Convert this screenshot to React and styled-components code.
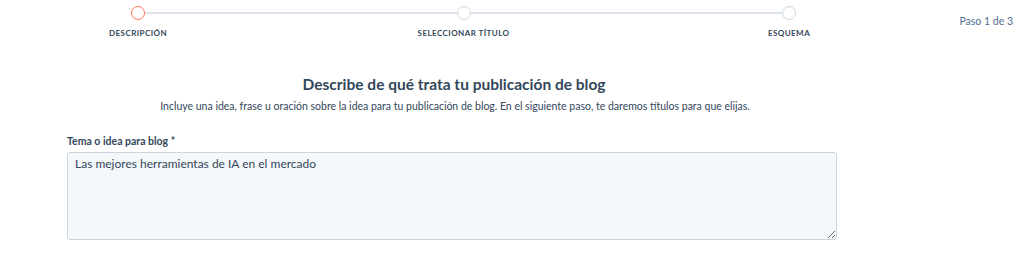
import React from "react";
import styled, { createGlobalStyle } from "styled-components";

const Global = createGlobalStyle`
  html, body { margin: 0; padding: 0; background: #ffffff; }
  body { font-family: "Lato", "Noto Sans", sans-serif; color: #33475b; }
  * { box-sizing: border-box; }
`;

const Page = styled.div`
  width: 1024px;
  height: 264px;
  overflow: hidden;
`;

const TopBar = styled.div`
  display: flex;
  align-items: flex-start;
  padding: 6px 11px 0 131px;
  height: 48px;
`;

const Stepper = styled.div`
  position: relative;
  display: flex;
  justify-content: space-between;
  width: 665px;
  &::before {
    content: "";
    position: absolute;
    left: 7px;
    right: 7px;
    top: 6px;
    height: 2px;
    background: #dfe3eb;
  }
`;

const Step = styled.div`
  position: relative;
  width: 14px;
  display: flex;
  flex-direction: column;
  align-items: center;
`;

const Dot = styled.div`
  width: 14px;
  height: 14px;
  border-radius: 50%;
  background: #ffffff;
  border: 1.5px solid ${(p) => (p.$active ? "#ff7a59" : "#cbd6e2")};
`;

const StepLabel = styled.div`
  margin-top: 8px;
  white-space: nowrap;
  font-size: 8px;
  font-weight: 700;
  letter-spacing: 0.45px;
  text-transform: uppercase;
  color: #33475b;
`;

const StepCount = styled.div`
  margin-left: auto;
  margin-top: 9px;
  font-size: 10.5px;
  color: #516f90;
`;

const Content = styled.div`
  width: 770px;
  margin-left: 67px;
  padding-top: 26px;
`;

const Title = styled.h2`
  margin: 0;
  padding-left: 4px;
  text-align: center;
  font-size: 15.5px;
  font-weight: 700;
  color: #33475b;
  line-height: 20px;
`;

const Subtitle = styled.p`
  margin: 5px 0 0;
  padding-left: 6px;
  text-align: center;
  font-size: 10.5px;
  color: #33475b;
  line-height: 14px;
`;

const Field = styled.div`
  margin-top: 21px;
  display: flex;
  flex-direction: column;
`;

const Label = styled.label`
  font-size: 10.5px;
  font-weight: 700;
  color: #33475b;
  line-height: 14px;
  margin-bottom: 4px;
`;

const TextArea = styled.textarea`
  width: 770px;
  height: 88px;
  padding: 3px 7px;
  background: #f5f8fa;
  border: 1px solid #cbd6e2;
  border-radius: 3px;
  font-family: "Lato", "Noto Sans", sans-serif;
  font-size: 12px;
  line-height: 16px;
  color: #33475b;
  resize: vertical;
  outline: none;
`;

export default function App() {
  const steps = ["Descripción", "Seleccionar título", "Esquema"];
  return (
    <Page>
      <Global />
      <TopBar>
        <Stepper>
          {steps.map((s, i) => (
            <Step key={s}>
              <Dot $active={i === 0} />
              <StepLabel>{s}</StepLabel>
            </Step>
          ))}
        </Stepper>
        <StepCount>Paso 1 de 3</StepCount>
      </TopBar>
      <Content>
        <Title>Describe de qué trata tu publicación de blog</Title>
        <Subtitle>
          Incluye una idea, frase u oración sobre la idea para tu publicación de blog. En el siguiente paso, te daremos títulos para que elijas.
        </Subtitle>
        <Field>
          <Label htmlFor="tema">Tema o idea para blog *</Label>
          <TextArea id="tema" defaultValue="Las mejores herramientas de IA en el mercado" />
        </Field>
      </Content>
    </Page>
  );
}
